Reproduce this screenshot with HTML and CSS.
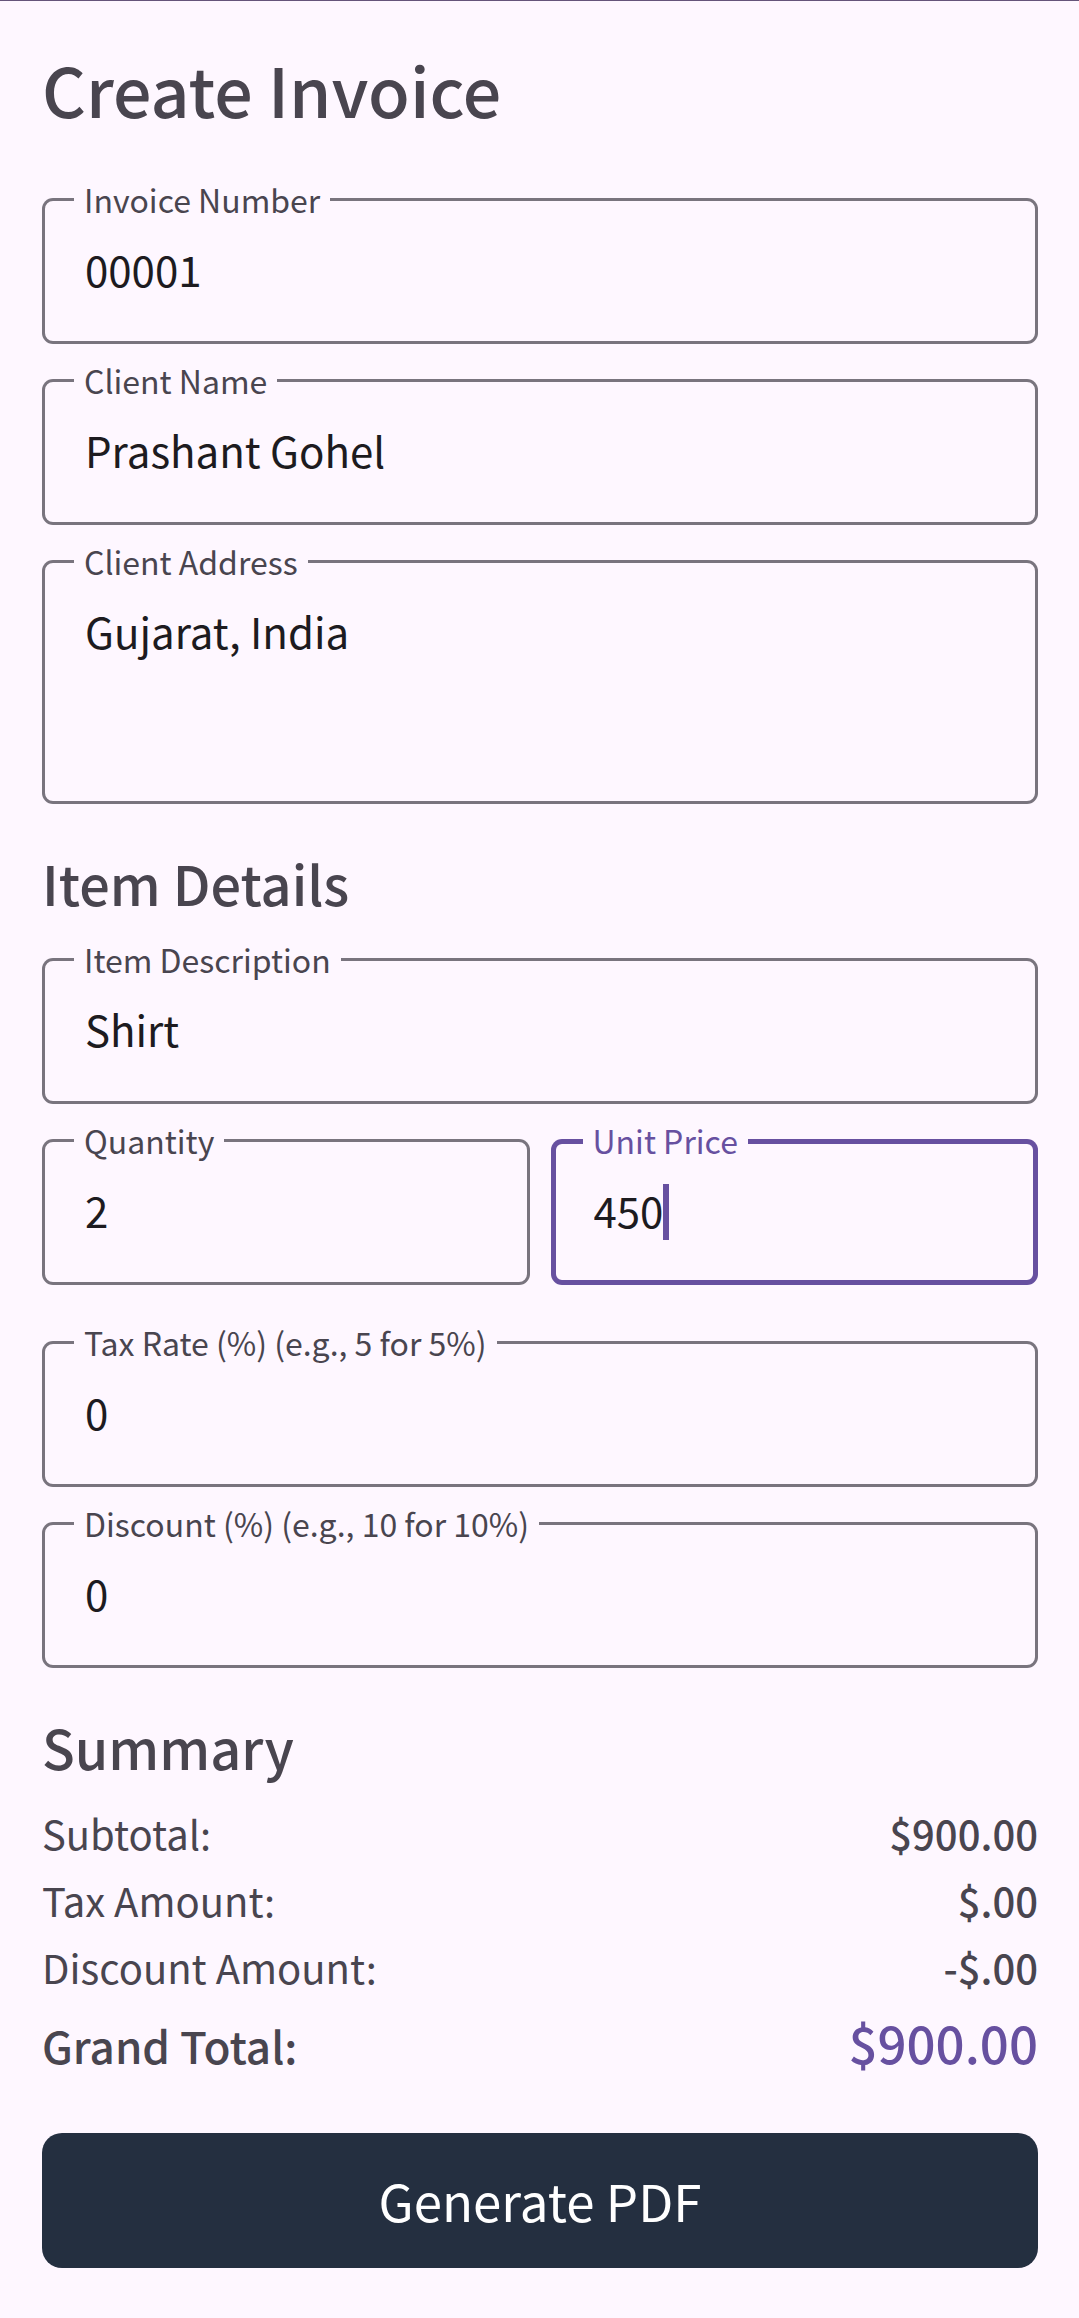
FILE: index.html
```html
<!DOCTYPE html>
<html lang="en">
<head>
  <meta charset="utf-8">
  <meta name="viewport" content="width=device-width, initial-scale=1">
  <title>Create Invoice</title>
  <link rel="stylesheet" href="styles.css">
</head>
<body>
  <form class="invoice">
    <h1 class="title">Create Invoice</h1>

    <div class="fields">
      <div class="field">
        <label class="field-label" for="number">Invoice Number</label>
        <input class="field-input" id="number" type="text" value="00001">
      </div>
      <div class="field">
        <label class="field-label" for="client">Client Name</label>
        <input class="field-input" id="client" type="text" value="Prashant Gohel">
      </div>
      <div class="field">
        <label class="field-label" for="address">Client Address</label>
        <textarea class="field-input field-input-tall" id="address">Gujarat, India</textarea>
      </div>
    </div>

    <h2 class="section-title">Item Details</h2>
    <div class="fields fields-item">
      <div class="field">
        <label class="field-label" for="description">Item Description</label>
        <input class="field-input" id="description" type="text" value="Shirt">
      </div>
      <div class="field-pair">
        <div class="field">
          <label class="field-label" for="quantity">Quantity</label>
          <input class="field-input" id="quantity" type="text" inputmode="numeric" value="2">
        </div>
        <div class="field field-active">
          <label class="field-label" for="price">Unit Price</label>
          <input class="field-input" id="price" type="text" inputmode="decimal" value="450">
          <span class="caret"></span>
        </div>
      </div>
    </div>

    <div class="fields fields-rates">
      <div class="field">
        <label class="field-label" for="tax">Tax Rate (%) (e.g., 5 for 5%)</label>
        <input class="field-input" id="tax" type="text" inputmode="decimal" value="0">
      </div>
      <div class="field">
        <label class="field-label" for="discount">Discount (%) (e.g., 10 for 10%)</label>
        <input class="field-input" id="discount" type="text" inputmode="decimal" value="0">
      </div>
    </div>

    <h2 class="section-title">Summary</h2>
    <dl class="summary">
      <div class="summary-row"><dt>Subtotal:</dt><dd class="amount">$900.00</dd></div>
      <div class="summary-row"><dt>Tax Amount:</dt><dd class="amount">$.00</dd></div>
      <div class="summary-row"><dt>Discount Amount:</dt><dd class="amount">-$.00</dd></div>
      <div class="summary-row summary-total"><dt>Grand Total:</dt><dd class="amount">$900.00</dd></div>
    </dl>

    <button class="generate" type="button">Generate PDF</button>
  </form>
</body>
</html>
```
FILE: styles.css
```css
:root {
  --surface: #fef7ff;
  --text: #1d1b20;
  --text-muted: #49454f;
  --outline: #79747e;
  --primary: #6750a0;
}

* {
  box-sizing: border-box;
}

body {
  margin: 0;
  border-top: 1px solid #65547a;
  background: var(--surface);
  color: var(--text-muted);
  font-family: "Noto Sans CJK JP", "Noto Sans", sans-serif;
  font-size: 42px;
  line-height: 63px;
}

.invoice {
  display: flex;
  flex-direction: column;
  padding: 41px 41px 51px 42px;
}

.title {
  margin: 0 0 62px;
  font-size: 68px;
  font-weight: 500;
  line-height: 94px;
}

.section-title {
  margin: 42px 0 0;
  font-size: 54px;
  font-weight: 500;
  line-height: 74px;
}

.fields {
  display: flex;
  flex-direction: column;
  gap: 35px;
}

.fields-item {
  margin-top: 38px;
}

.fields-rates {
  margin-top: 56px;
}

.field-pair {
  display: grid;
  grid-template-columns: 1fr 1fr;
  gap: 21px;
}

.field {
  position: relative;
  display: flex;
  align-items: flex-start;
  min-width: 0;
  min-height: 146px;
  padding: 39px 43px 44px;
  border-radius: 11px;
  box-shadow: inset 0 0 0 3px var(--outline);
}

.field-active {
  box-shadow: inset 0 0 0 5px var(--primary);
}

.field-label {
  position: absolute;
  top: -20px;
  left: 32px;
  padding: 0 10px;
  background: var(--surface);
  font-size: 32px;
  line-height: 42px;
  white-space: nowrap;
}

.field-active .field-label {
  color: var(--primary);
}

.field-input {
  flex: 1;
  width: 100%;
  min-width: 0;
  height: 63px;
  margin: 0;
  padding: 0;
  border: 0;
  outline: 0;
  background: transparent;
  color: var(--text);
  font: inherit;
  resize: none;
}

.field-input-tall {
  height: 161px;
}

.field-active .field-input {
  flex: none;
  width: auto;
  field-sizing: content;
}

.caret {
  width: 6px;
  height: 56px;
  margin-top: 6px;
  background: var(--primary);
}

.summary {
  display: flex;
  flex-direction: column;
  gap: 4px;
  margin: 18px 0 49px;
  font-size: 40px;
}

.summary-row {
  display: flex;
  align-items: baseline;
  justify-content: space-between;
}

.amount {
  margin: 0;
  font-weight: 500;
}

.summary-total {
  font-size: 44px;
  font-weight: 500;
  line-height: 78px;
}

.summary-total .amount {
  color: var(--primary);
  font-size: 51px;
}

.generate {
  height: 135px;
  border: 0;
  border-radius: 20px;
  background: #242f40;
  color: #fff;
  font: inherit;
  font-size: 51px;
}
```
